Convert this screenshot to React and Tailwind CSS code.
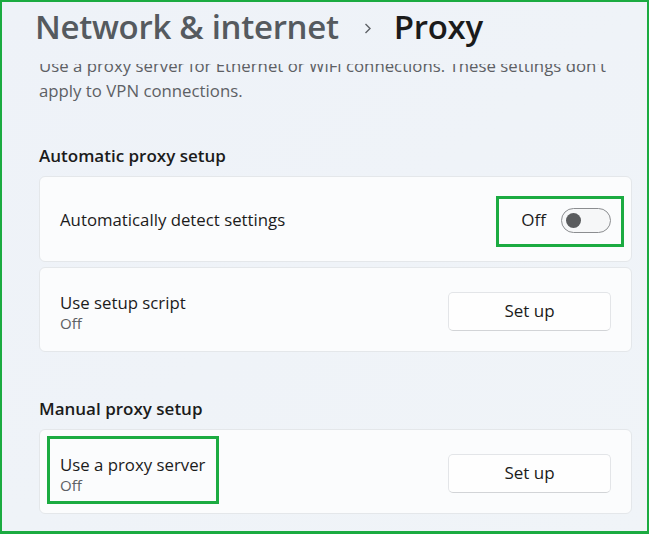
import React from "react";

const font = { fontFamily: '"Open Sans", "Noto Sans", sans-serif' };

function Toggle() {
  return (
    <span className="inline-flex h-[25px] w-[50px] items-center rounded-full border border-[#8b8d90] bg-[#f6f7f8] px-[4px]">
      <span className="h-[15px] w-[15px] rounded-full bg-[#5a5c5e]" />
    </span>
  );
}

function SetupButton() {
  return (
    <button className="h-[39px] w-[163px] rounded-[5px] border border-[#e3e5e8] border-b-[#d2d4d7] bg-[#fefefe] text-[17px] text-[#1b1b1b]">
      Set up
    </button>
  );
}

export default function App() {
  return (
    <div
      style={font}
      className="flex h-[534px] w-[649px] flex-col overflow-hidden border-2 border-b-[3px] border-[#1bab41] bg-gradient-to-br from-[#eef2f8] to-[#f0f4f8]"
    >
      <header className="flex h-[62px] shrink-0 items-start pl-[33px] pt-[2px]">
        <h1 className="flex items-center text-[33px] font-semibold leading-[46px] tracking-[-0.3px]">
          <span className="text-[#555a5f]">Network &amp; internet</span>
          <svg
            className="ml-[25px] mr-[22px] mt-[2px]"
            width="8"
            height="11"
            viewBox="0 0 8 11"
          >
            <path
              d="M1.5 1 L6 5.5 L1.5 10"
              fill="none"
              stroke="#5e6166"
              strokeWidth="1.4"
            />
          </svg>
          <span className="text-[#1b1b1b]">Proxy</span>
        </h1>
      </header>

      <div className="flex-1 overflow-hidden">
        <div className="-mt-[11px] pl-[37px] pr-[15px]">
          <p className="text-[16.8px] leading-[25px] text-[#5d6064]">
            Use a proxy server for Ethernet or WiFi connections. These settings don't
            <br />
            apply to VPN connections.
          </p>

          <h2 className="mt-[41px] text-[17px] font-semibold leading-[24px] text-[#1b1b1b]">
            Automatic proxy setup
          </h2>

          <div className="relative mt-[8px] flex h-[86px] items-center justify-between rounded-[6px] border border-[#e4e7ea] bg-[#fbfcfd] pl-[20px] pr-[20px] pt-[2px]">
            <span className="text-[16.8px] text-[#1b1b1b]">
              Automatically detect settings
            </span>
            <div className="flex items-center gap-[15px]">
              <span className="text-[17px] text-[#1b1b1b]">Off</span>
              <Toggle />
            </div>
            <div className="absolute right-[7px] top-[19px] h-[51px] w-[128px] border-[3px] border-[#1bab41]" />
          </div>

          <div className="mt-[5px] flex h-[85px] items-center justify-between rounded-[6px] border border-[#e4e7ea] bg-[#fbfcfd] pl-[20px] pr-[20px] pt-[3px]">
            <div className="flex flex-col">
              <span className="text-[16.8px] leading-[24px] text-[#1b1b1b]">
                Use setup script
              </span>
              <span className="text-[15px] leading-[16px] text-[#5d6064]">Off</span>
            </div>
            <SetupButton />
          </div>

          <h2 className="mt-[45px] text-[17px] font-semibold leading-[24px] text-[#1b1b1b]">
            Manual proxy setup
          </h2>

          <div className="relative mt-[8px] flex h-[85px] items-center justify-between rounded-[6px] border border-[#e4e7ea] bg-[#fbfcfd] pl-[20px] pr-[20px] pt-[3px]">
            <div className="flex flex-col">
              <span className="text-[16.8px] leading-[24px] text-[#1b1b1b]">
                Use a proxy server
              </span>
              <span className="text-[15px] leading-[16px] text-[#5d6064]">Off</span>
            </div>
            <SetupButton />
            <div className="absolute left-[7px] top-[6px] h-[68px] w-[172px] border-[3px] border-[#1bab41]" />
          </div>
        </div>
      </div>
    </div>
  );
}
